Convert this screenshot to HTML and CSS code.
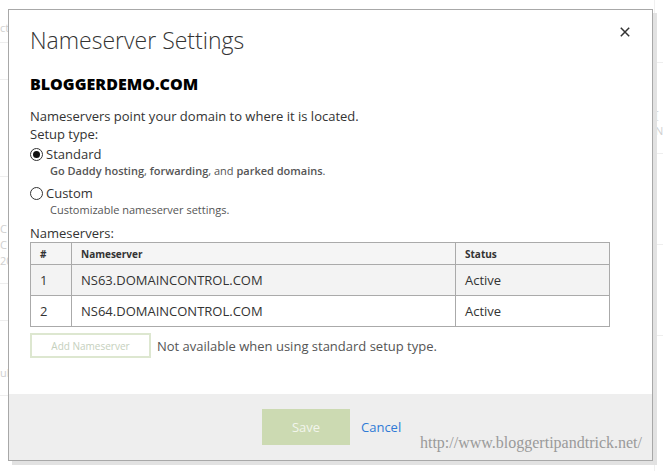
FILE: index.html
```html
<!DOCTYPE html>
<html lang="en">
<head>
  <meta charset="UTF-8" />
  <title>Nameserver Settings</title>
  <link rel="stylesheet" href="styles.css">
</head>
<body>
  <!-- faint page behind the dialog -->
  <div class="page">
    <div class="page-left">
      <div class="ghost-row first">ct</div>
      <div class="ghost-row h36"></div>
      <div class="ghost-row h96"></div>
      <div class="ghost-row ghost-text">C<br>C<br>20</div>
      <div class="ghost-row h36"></div>
      <div class="ghost-row ghost-text">ub</div>
    </div>
    <div class="page-right">
      <div class="ghost-row h62"></div>
      <div class="ghost-row ghost-text">[<br>N</div>
      <div class="ghost-row h90"></div>
      <div class="ghost-row h90"></div>
    </div>
  </div>

  <div class="modal">
    <div class="modal-head">
      <h1>Nameserver Settings</h1>
      <svg class="close" width="10" height="10" viewBox="0 0 10 10">
        <path d="M0.8 0.8 L9.2 9.2 M9.2 0.8 L0.8 9.2" stroke="#333" stroke-width="1.5" fill="none"/>
      </svg>
    </div>

    <div class="modal-body">
      <h2>BLOGGERDEMO.COM</h2>
      <p>Nameservers point your domain to where it is located.</p>
      <p>Setup type:</p>

      <label class="option">
        <span class="radio checked"></span>Standard
      </label>
      <div class="hint"><b>Go Daddy hosting</b>, <b>forwarding</b>, and <b>parked domains</b>.</div>

      <label class="option">
        <span class="radio"></span>Custom
      </label>
      <div class="hint">Customizable nameserver settings.</div>

      <p class="ns-label">Nameservers:</p>
      <table class="ns-table">
        <tr>
          <th class="col-num">#</th>
          <th class="col-name">Nameserver</th>
          <th>Status</th>
        </tr>
        <tr class="shaded">
          <td>1</td>
          <td>NS63.DOMAINCONTROL.COM</td>
          <td>Active</td>
        </tr>
        <tr>
          <td>2</td>
          <td>NS64.DOMAINCONTROL.COM</td>
          <td>Active</td>
        </tr>
      </table>

      <div class="add-row">
        <button class="add-btn" disabled>Add Nameserver</button>
        <span class="note">Not available when using standard setup type.</span>
      </div>
    </div>

    <div class="modal-foot">
      <button class="save-btn" disabled>Save</button>
      <a class="cancel" href="#">Cancel</a>
      <span class="watermark">http://www.bloggertipandtrick.net/</span>
    </div>
  </div>
</body>
</html>
```

FILE: styles.css
```css
body {
  margin: 0;
  background: #ffffff;
  font-family: "Open Sans", "Noto Sans", sans-serif;
  color: #333333;
  width: 663px;
  height: 471px;
  overflow: hidden;
  position: relative;
}

/* background page */
.page {
  display: flex;
  justify-content: space-between;
  height: 471px;
}

.page-left,
.page-right {
  width: 30px;
  color: #d0d0d0;
  font-size: 11px;
  line-height: 16px;
  overflow: hidden;
}

.page-right {
  width: 8px;
  border-left: 1px solid #f0f0f0;
}

.ghost-row {
  border-bottom: 1px solid #eeeeee;
}

.ghost-row.first {
  padding: 20px 0 6px;
}

.ghost-row.h36 { height: 36px; }
.ghost-row.h62 { height: 62px; }
.ghost-row.h90 { height: 90px; }
.ghost-row.h96 { height: 96px; }

.ghost-text {
  padding: 44px 0 14px;
}

/* dialog */
.modal {
  position: absolute;
  left: 8px;
  top: 9px;
  width: 643px;
  height: 450px;
  border: 1px solid #a8a8a8;
  background: #ffffff;
  box-shadow: 4px 4px 0 #e2e2e2;
  display: flex;
  flex-direction: column;
}

.modal-head {
  display: flex;
  justify-content: space-between;
  align-items: flex-start;
  padding: 13px 22px 0 21px;
}

.modal-head h1 {
  margin: 0;
  font-size: 23px;
  font-weight: 300;
  color: #333333;
  line-height: 34px;
}

.close {
  margin-top: 4px;
}

.modal-body {
  flex: 1;
  padding: 0 21px;
}

.modal-body h2 {
  margin: 16px 0 12px;
  font-size: 16px;
  font-weight: 800;
  color: #000000;
  line-height: 22px;
}

.modal-body p {
  margin: 0;
  font-size: 13px;
  line-height: 18px;
}

.option {
  display: flex;
  align-items: center;
  font-size: 13px;
  line-height: 20px;
  margin-top: 1px;
}

.radio {
  width: 11px;
  height: 11px;
  border: 1px solid #333333;
  border-radius: 50%;
  margin-right: 3px;
  position: relative;
}

.radio.checked::after {
  content: "";
  position: absolute;
  left: 2px;
  top: 2px;
  width: 7px;
  height: 7px;
  border-radius: 50%;
  background: #111111;
}

.hint {
  font-size: 11px;
  line-height: 14px;
  color: #555555;
  padding-left: 20px;
  margin-bottom: 5px;
}

.hint b {
  font-weight: 600;
}

.modal-body p.ns-label {
  margin-top: 7px;
}

.ns-table {
  width: 580px;
  border-collapse: collapse;
  font-size: 13px;
}

.ns-table th,
.ns-table td {
  border: 1px solid #aaaaaa;
  text-align: left;
  padding: 0 9px;
}

.ns-table th {
  background: #f5f5f5;
  font-size: 10px;
  font-weight: 700;
  height: 21px;
}

.ns-table td {
  height: 30px;
}

.ns-table .col-num {
  width: 22px;
}

.ns-table .col-name {
  width: 365px;
}

.ns-table tr.shaded td {
  background: #f3f3f3;
}

.add-row {
  display: flex;
  align-items: center;
  margin-top: 6px;
  gap: 6px;
}

.add-btn {
  width: 121px;
  height: 25px;
  border: 2px solid #dde7d0;
  background: #ffffff;
  color: #c5d0bd;
  font-family: inherit;
  font-size: 10px;
}

.note {
  font-size: 13px;
  color: #555555;
}

.modal-foot {
  height: 66px;
  background: #eeeeee;
  display: flex;
  align-items: center;
  padding-left: 253px;
  position: relative;
}

.save-btn {
  width: 88px;
  height: 36px;
  border: none;
  background: #ccdab2;
  color: #f2f5ec;
  font-family: inherit;
  font-size: 13px;
}

.cancel {
  margin-left: 11px;
  color: #2f7ad6;
  text-decoration: none;
  font-size: 13px;
}

.watermark {
  position: absolute;
  right: 10px;
  bottom: 8px;
  font-family: "Liberation Serif", serif;
  font-size: 16px;
  color: #9a9a9a;
}
```
